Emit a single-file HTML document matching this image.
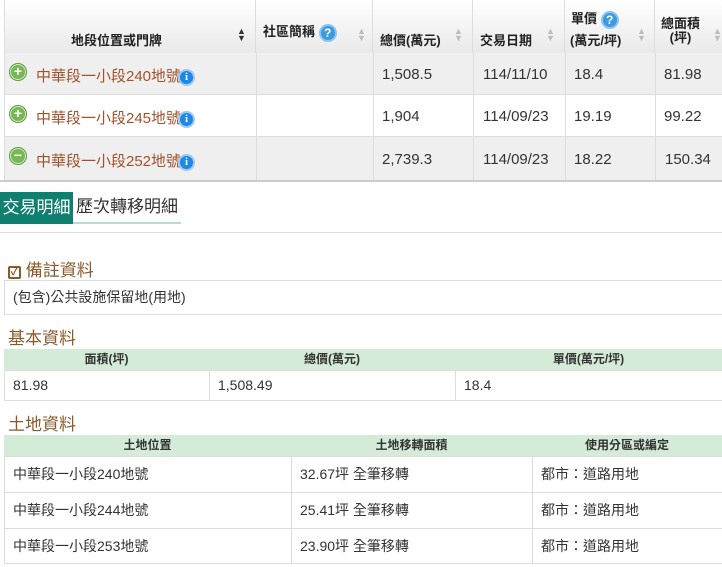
<!DOCTYPE html>
<html><head><meta charset="utf-8"><style>
*{margin:0;padding:0;box-sizing:border-box}
body{width:722px;height:567px;overflow:hidden;background:#fff;font-family:"Liberation Sans","Noto Sans CJK TC",sans-serif;color:#333;position:relative}
.a{position:absolute}
.hd{position:absolute;top:0;height:53px;background:linear-gradient(#fff,#e9e9e9);border-right:1px solid #ddd;font-size:13px;font-weight:bold;color:#222}
.plus{position:absolute;left:10px;width:16px;height:16px;border-radius:50%;background:#76b852;border:1px solid #d8e8cc;box-shadow:0 0 0 1px #5a9a3a;color:#fff;font-size:14px;line-height:13px;text-align:center;font-weight:bold}
.info{display:inline-block;width:17px;height:17px;border-radius:50%;background:#1e88e5;border:2px solid #9ccaf0;color:#fff;font-size:11px;line-height:13px;text-align:center;font-weight:bold;font-family:"Liberation Serif",serif;vertical-align:middle;margin-left:-3px}
.q{display:inline-block;width:18px;height:18px;border-radius:50%;background:#3a9be0;border:2px solid #8cc6ef;color:#fff;font-size:12px;line-height:14px;text-align:center;font-weight:bold;vertical-align:middle}
.lnk{color:#a0522d}
.h2{position:absolute;left:8px;font-size:17px;color:#8b5a2b}
.gh{position:absolute;background:#d3ebd7;font-size:12px;font-weight:bold;color:#333;text-align:center;line-height:21px}
.tc{position:absolute;border:1px solid #ddd;font-size:14px;color:#333;padding-left:8px}
.v{position:absolute;font-size:15px}
</style></head><body>
<div class="a" style="left:4px;top:0;width:718px;height:180px;border-left:1px solid #ddd"></div>
<div class="hd" style="left:5px;width:251px"><span class="a" style="left:66px;top:30px">地段位置或門牌</span><span class="a" style="left:232px;top:26px;font-size:9px;color:#333">▲</span><span class="a" style="left:232px;top:33px;font-size:9px;color:#333">▼</span></div>
<div class="hd" style="left:256px;width:117px"><span class="a" style="left:7px;top:21px">社區簡稱 <span class="q">?</span></span><span class="a" style="left:101px;top:26px;font-size:9px;color:#bbb">▲</span><span class="a" style="left:101px;top:33px;font-size:9px;color:#bbb">▼</span></div>
<div class="hd" style="left:373px;width:100px"><span class="a" style="left:7px;top:30px">總價(萬元)</span><span class="a" style="left:81px;top:26px;font-size:9px;color:#bbb">▲</span><span class="a" style="left:81px;top:33px;font-size:9px;color:#bbb">▼</span></div>
<div class="hd" style="left:473px;width:92px"><span class="a" style="left:7px;top:30px">交易日期</span><span class="a" style="left:73px;top:26px;font-size:9px;color:#bbb">▲</span><span class="a" style="left:73px;top:33px;font-size:9px;color:#bbb">▼</span></div>
<div class="hd" style="left:565px;width:90px"><span class="a" style="left:6px;top:8px">單價 <span class="q">?</span></span><span class="a" style="left:5px;top:30px">(萬元/坪)</span><span class="a" style="left:72px;top:26px;font-size:9px;color:#bbb">▲</span><span class="a" style="left:72px;top:33px;font-size:9px;color:#bbb">▼</span></div>
<div class="hd" style="left:655px;width:67px;border-right:none"><span class="a" style="left:6px;top:17px;line-height:14px;text-align:center">總面積<br>(坪)</span><span class="a" style="left:58px;top:26px;font-size:9px;color:#bbb">▲</span><span class="a" style="left:58px;top:33px;font-size:9px;color:#bbb">▼</span></div>

<div class="a" style="left:5px;top:53px;width:717px;height:42px;background:#efefef"></div>
<div class="a" style="left:5px;top:137px;width:717px;height:43px;background:#efefef"></div>
<div class="a" style="left:5px;top:94px;width:717px;height:1px;background:#ddd"></div>
<div class="a" style="left:5px;top:136px;width:717px;height:1px;background:#ddd"></div>
<div class="a" style="left:0;top:180px;width:722px;height:2px;background:#ccc"></div>
<div class="a" style="left:256px;top:53px;width:1px;height:127px;background:#ddd"></div>
<div class="a" style="left:373px;top:53px;width:1px;height:127px;background:#ddd"></div>
<div class="a" style="left:473px;top:53px;width:1px;height:127px;background:#ddd"></div>
<div class="a" style="left:565px;top:53px;width:1px;height:127px;background:#ddd"></div>
<div class="a" style="left:655px;top:53px;width:1px;height:127px;background:#ddd"></div>

<div class="plus" style="top:64px">+</div>
<div class="plus" style="top:106px">+</div>
<div class="plus" style="top:148px">−</div>
<div class="a lnk" style="left:36px;top:65px;font-size:15px">中華段一小段240地號<span class="info">i</span></div>
<div class="a lnk" style="left:36px;top:107px;font-size:15px">中華段一小段245地號<span class="info">i</span></div>
<div class="a lnk" style="left:36px;top:150px;font-size:15px">中華段一小段252地號<span class="info">i</span></div>

<div class="v" style="left:382px;top:66px">1,508.5</div>
<div class="v" style="left:382px;top:108px">1,904</div>
<div class="v" style="left:382px;top:151px">2,739.3</div>
<div class="v" style="left:483px;top:66px">114/11/10</div>
<div class="v" style="left:483px;top:108px">114/09/23</div>
<div class="v" style="left:483px;top:151px">114/09/23</div>
<div class="v" style="left:574px;top:66px">18.4</div>
<div class="v" style="left:574px;top:108px">19.19</div>
<div class="v" style="left:574px;top:151px">18.22</div>
<div class="v" style="left:664px;top:66px">81.98</div>
<div class="v" style="left:664px;top:108px">99.22</div>
<div class="v" style="left:665px;top:151px">150.34</div>

<div class="a" style="left:0;top:192px;width:73px;height:32px;background:#0f7f6f;color:#fff;font-size:17px;line-height:32px;text-align:center">交易明細</div>
<div class="a" style="left:73px;top:192px;width:108px;height:32px;background:#fff;color:#333;font-size:17px;line-height:30px;text-align:center;border-bottom:2px solid #b5ddd5">歷次轉移明細</div>
<div class="a" style="left:0;top:232px;width:722px;height:1px;background:#ddd"></div>

<div class="h2" style="top:256px"><span style="display:inline-block;width:13px;height:13px;border:2px solid #8b5a2b;border-radius:2px;font-size:11px;line-height:9px;text-align:center;font-weight:bold;vertical-align:1px">✓</span> 備註資料</div>
<div class="tc" style="left:4px;top:280px;width:720px;height:35px;line-height:33px;padding-left:8px">(包含)公共設施保留地(用地)</div>

<div class="h2" style="top:324px;left:8px">基本資料</div>
<div class="gh" style="left:4px;top:349px;width:205px">面積(坪)</div>
<div class="gh" style="left:209px;top:349px;width:246px">總價(萬元)</div>
<div class="gh" style="left:455px;top:349px;width:267px">單價(萬元/坪)</div>
<div class="tc" style="left:4px;top:370px;width:206px;height:31px;line-height:29px">81.98</div>
<div class="tc" style="left:209px;top:370px;width:247px;height:31px;line-height:29px">1,508.49</div>
<div class="tc" style="left:455px;top:370px;width:268px;height:31px;line-height:29px">18.4</div>

<div class="h2" style="top:410px">土地資料</div>
<div class="gh" style="left:4px;top:435px;width:287px">土地位置</div>
<div class="gh" style="left:291px;top:435px;width:241px">土地移轉面積</div>
<div class="gh" style="left:532px;top:435px;width:190px">使用分區或編定</div>
<div class="tc" style="left:4px;top:456px;width:288px;height:37px;line-height:35px">中華段一小段240地號</div>
<div class="tc" style="left:291px;top:456px;width:242px;height:37px;line-height:35px">32.67坪 全筆移轉</div>
<div class="tc" style="left:532px;top:456px;width:191px;height:37px;line-height:35px">都市：道路用地</div>
<div class="tc" style="left:4px;top:492px;width:288px;height:37px;line-height:35px">中華段一小段244地號</div>
<div class="tc" style="left:291px;top:492px;width:242px;height:37px;line-height:35px">25.41坪 全筆移轉</div>
<div class="tc" style="left:532px;top:492px;width:191px;height:37px;line-height:35px">都市：道路用地</div>
<div class="tc" style="left:4px;top:528px;width:288px;height:36px;line-height:34px">中華段一小段253地號</div>
<div class="tc" style="left:291px;top:528px;width:242px;height:36px;line-height:34px">23.90坪 全筆移轉</div>
<div class="tc" style="left:532px;top:528px;width:191px;height:36px;line-height:34px">都市：道路用地</div>
</body></html>
